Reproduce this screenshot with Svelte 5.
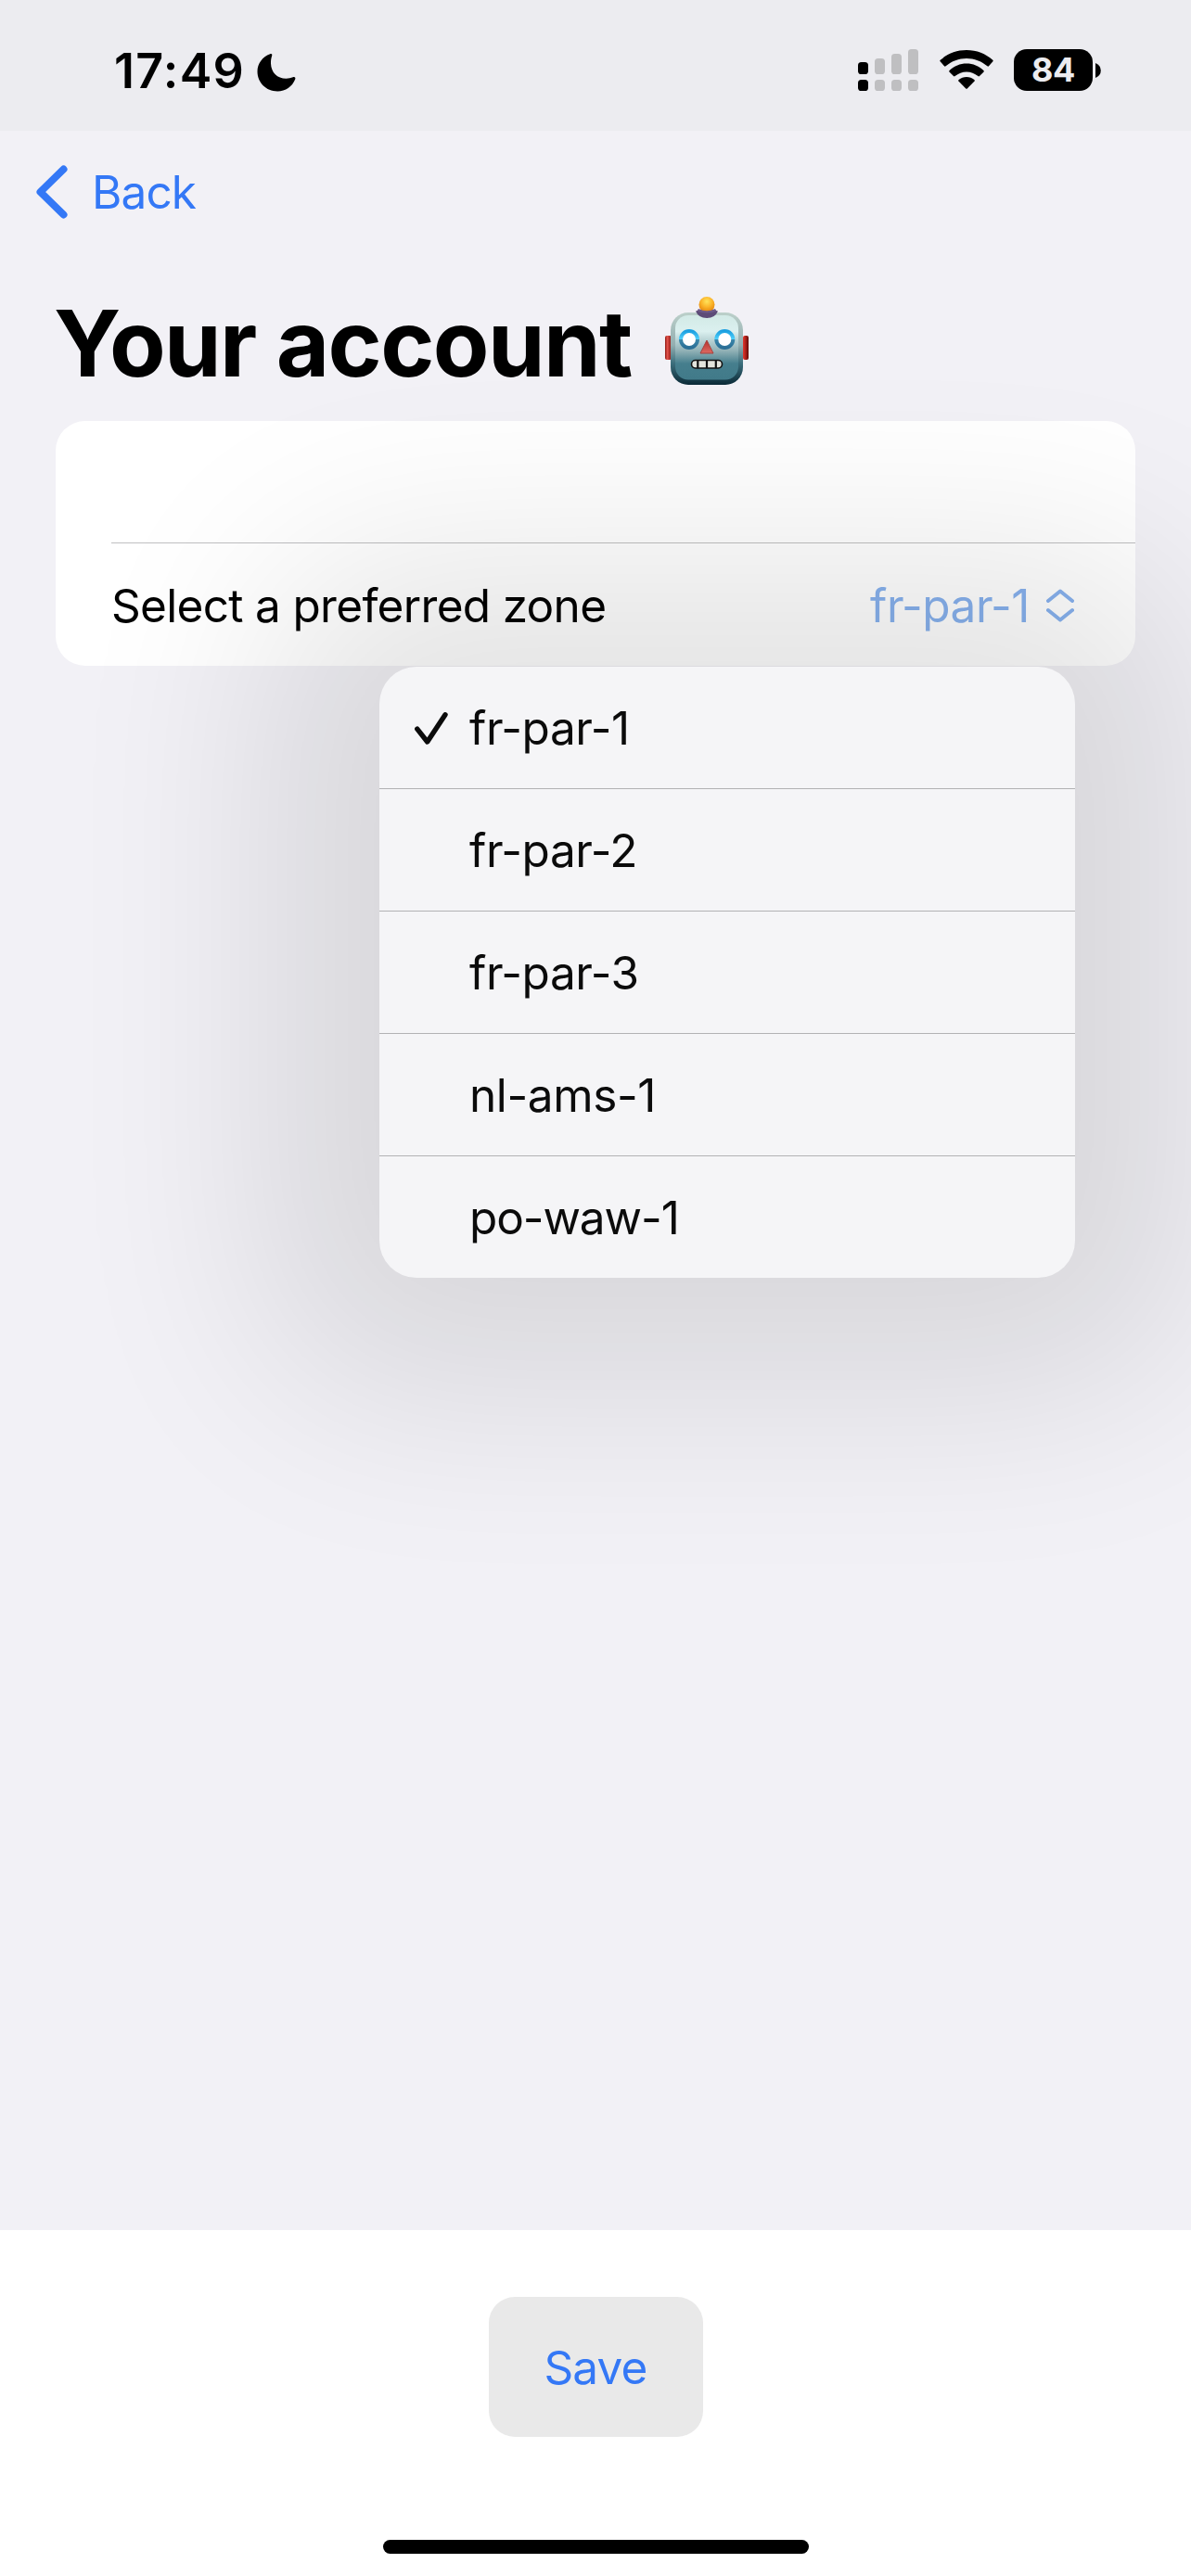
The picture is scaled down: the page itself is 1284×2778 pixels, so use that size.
<script>
  const zones = ['fr-par-1', 'fr-par-2', 'fr-par-3', 'nl-ams-1', 'po-waw-1'];
  let selected = $state('fr-par-1');
</script>

<div class="screen">
  <header class="status">
    <div class="clock">
      <span class="time">17:49</span>
      <svg class="moon" width="42" height="42" viewBox="0 0 42 42">
        <path d="M14.2 1.2C15.8.6 16.7 1.4 16.2 3C15.2 6 14.9 8.6 15 11.4C15.3 21 22 27.7 31.5 27.7C34.300 27.7 36.500 27.200 38.800 26.300C40.900 25.600 41.900 26.800 41.200 28.600C38 36.600 30.800 41.500 22.200 41.500C9.800 41.500.5 32.200.5 20.100C.5 11.500 5.800 4.300 14.200 1.200Z" />
      </svg>
    </div>
    <div class="indicators">
      <svg class="signal" width="65" height="45" viewBox="0 0 65 45">
        <g fill="#000">
          <rect x="0" y="14" width="11" height="13" rx="3.600" />
          <rect x="0" y="33" width="11" height="12" rx="3.600" />
        </g>
        <g fill="#bfbfc1">
          <rect x="18" y="10" width="11" height="17" rx="3.600" />
          <rect x="36" y="5" width="11" height="22" rx="3.600" />
          <rect x="54" y="0" width="11" height="27" rx="3.600" />
          <rect x="18" y="33" width="11" height="12" rx="3.600" />
          <rect x="36" y="33" width="11" height="12" rx="3.600" />
          <rect x="54" y="33" width="11" height="12" rx="3.600" />
        </g>
      </svg>
      <svg class="wifi" width="58" height="43" viewBox="0 0 58 43">
        <path d="M.6 12.300Q-.1 11.500.7 10.800C8.500 3.800 18 0 29 0S49.500 3.800 57.300 10.800Q58.100 11.500 57.400 12.300L53 17.300Q52.200 18.100 51.400 17.300C45 11.800 37.500 8.900 29 8.900S13 11.800 6.600 17.300Q5.800 18.100 5 17.300Z" />
        <path d="M10.400 23.400Q9.800 22.700 10.600 21.900C15.800 17.300 22 14.600 29 14.600S42.200 17.300 47.400 21.900Q48.200 22.700 47.600 23.400L43 28Q42.200 28.800 41.400 28.100C37.700 25 33.700 23.400 29 23.400S20.300 25 16.600 28.100Q15.800 28.800 15 28Z" />
        <path d="M20.400 33.500Q19.800 32.800 20.600 32.100C23 30.100 25.800 29 29 29S35 30.100 37.400 32.100Q38.200 32.800 37.600 33.500L30 41.200Q29 42.200 28 41.200Z" />
      </svg>
      <div class="battery">
        <span class="charge">84</span>
        <svg class="nub" width="6" height="16" viewBox="0 0 6 16"><path d="M0 0Q5.800 2.600 5.800 8T0 16Z" /></svg>
      </div>
    </div>
  </header>

  <main class="content">
    <nav class="nav">
      <svg width="34" height="58" viewBox="0 0 34 58">
        <path d="M29.500 4.500L4.500 29L29.500 53.500" fill="none" stroke="#3478f6" stroke-width="8" stroke-linecap="round" stroke-linejoin="round" />
      </svg>
      <span class="back">Back</span>
    </nav>

    <h1 class="title">
      <span class="title-text">Your account</span>
      <svg class="robot" width="92" height="96" viewBox="0 0 92 96">
        <defs>
          <linearGradient id="rim" x1="0" y1="0" x2="0" y2="1">
            <stop offset="0" stop-color="#bcd0ca" />
            <stop offset=".45" stop-color="#93aeb0" />
            <stop offset=".7" stop-color="#3c6f7d" />
            <stop offset="1" stop-color="#0b2a37" />
          </linearGradient>
          <linearGradient id="face" x1="0" y1="0" x2="0" y2="1">
            <stop offset="0" stop-color="#d2eae6" />
            <stop offset=".25" stop-color="#dbf0ef" />
            <stop offset=".55" stop-color="#91b1b6" />
            <stop offset=".75" stop-color="#457e8d" />
            <stop offset="1" stop-color="#417a89" />
          </linearGradient>
          <linearGradient id="earL"><stop offset="0" stop-color="#8d1b16" /><stop offset=".35" stop-color="#e2524a" /><stop offset="1" stop-color="#861510" /></linearGradient>
          <linearGradient id="earR"><stop offset="0" stop-color="#e2382f" /><stop offset=".4" stop-color="#b8241c" /><stop offset="1" stop-color="#5d0a08" /></linearGradient>
          <linearGradient id="eye" x1="0" y1="0" x2="0" y2="1">
            <stop offset="0" stop-color="#1b9fe0" />
            <stop offset=".48" stop-color="#4fd0fb" />
            <stop offset=".52" stop-color="#3b87ab" />
            <stop offset="1" stop-color="#2b6f96" />
          </linearGradient>
          <radialGradient id="bulb" cx=".5" cy=".3" r=".7">
            <stop offset="0" stop-color="#ffe45c" />
            <stop offset=".5" stop-color="#fbb52a" />
            <stop offset="1" stop-color="#e2820c" />
          </radialGradient>
          <linearGradient id="nose" x1="0" y1="0" x2="0" y2="1"><stop offset="0" stop-color="#b9302b" /><stop offset="1" stop-color="#dc6b63" /></linearGradient>
        </defs>
        <rect x="0" y="42" width="7" height="26" rx="2" fill="url(#earL)" />
        <rect x="84" y="42" width="6" height="26" rx="2" fill="url(#earR)" />
        <rect x="6" y="17" width="78" height="78" rx="19" fill="url(#rim)" />
        <rect x="11" y="20" width="68" height="69.500" rx="14" fill="url(#face)" />
        <path d="M33 15.500Q45 11 57 15.500Q54 23 45 23T33 15.500Z" fill="#5d4c78" />
        <circle cx="45" cy="8.500" r="8.500" fill="url(#bulb)" />
        <path d="M36 13Q45 17.500 54 13L55.500 15.500Q45 19.500 34.500 15.500Z" fill="#6d5a88" />
        <circle cx="26" cy="46" r="9" fill="#fff" stroke="url(#eye)" stroke-width="4" />
        <circle cx="64.300" cy="46" r="9" fill="#fff" stroke="url(#eye)" stroke-width="4" />
        <path d="M45 47L52 61H38Z" fill="url(#nose)" stroke="#a5413d" stroke-width="1" stroke-linejoin="round" />
        <rect x="28.500" y="68.500" width="33" height="8.500" rx="4.200" fill="#e3e4dc" stroke="#111" stroke-width="1.600" />
        <path d="M35.300 68.500V77M45 68.500V77M54.800 68.500V77" stroke="#111" stroke-width="2.200" />
      </svg>
    </h1>

    <section class="card">
      <div class="row empty"></div>
      <div class="row picker">
        <span class="label">Select a preferred zone</span>
        <span class="value">
          <span class="value-text">{selected}</span>
          <svg width="30" height="36" viewBox="0 0 30 36">
            <path d="M2 13L15 2.500L28 13M2 23L15 33.500L28 23" fill="none" stroke="#88b2ee" stroke-width="4" stroke-linecap="round" stroke-linejoin="round" />
          </svg>
        </span>
      </div>
      <div class="menu">
        {#each zones as zone}
          <div class="option" onclick={() => (selected = zone)} role="menuitem" tabindex="-1" onkeydown={() => (selected = zone)}>
            <span class="mark">
              {#if zone === selected}
                <svg width="36" height="35" viewBox="0 0 36 35">
                  <path d="M2.800 18.200L13.700 32L33 2.800" fill="none" stroke="#0b0b0b" stroke-width="5.400" stroke-linecap="round" stroke-linejoin="round" />
                </svg>
              {/if}
            </span>
            <span class="zone">{zone}</span>
          </div>
        {/each}
      </div>
    </section>
  </main>

  <footer class="footer">
    <button class="save">Save</button>
    <div class="home"></div>
  </footer>
</div>

<style>
  :global(body) {
    margin: 0;
    background: #f2f1f6;
  }
  .screen {
    width: 1284px;
    height: 2778px;
    display: flex;
    flex-direction: column;
    overflow: hidden;
    box-sizing: border-box;
    background: #f2f1f6;
    color: #000;
    font-family: Inter, 'Liberation Sans', sans-serif;
    font-size: 49.5px;
    line-height: 60px;
  }
  .screen * {
    box-sizing: border-box;
  }
  svg {
    display: block;
    flex: none;
  }
  .status {
    height: 141px;
    flex: none;
    display: flex;
    justify-content: space-between;
    padding: 53px 97px 0 123px;
    background: #ececf0;
  }
  .clock,
  .indicators {
    display: flex;
    align-items: flex-start;
  }
  .time {
    width: 154px;
    margin-top: -6px;
    font-size: 52px;
    font-weight: 600;
    letter-spacing: 1.3px;
  }
  .moon {
    margin-top: 4px;
  }
  .wifi {
    margin: 1px 22px 0 23px;
  }
  .battery {
    display: flex;
    align-items: center;
    gap: 3px;
  }
  .charge {
    width: 85px;
    height: 45px;
    border-radius: 14px;
    background: #000;
    color: #ececf0;
    font-size: 36px;
    font-weight: 700;
    line-height: 45px;
    letter-spacing: -0.5px;
    text-align: center;
  }
  .content {
    flex: 1;
    display: flex;
    flex-direction: column;
  }
  .nav {
    height: 132px;
    display: flex;
    align-items: center;
    gap: 26px;
    padding-left: 39px;
    color: #3478f6;
  }
  .back {
    letter-spacing: -0.9px;
  }
  .title {
    height: 181px;
    margin: 0;
    padding: 37px 0 0 58px;
    display: flex;
    align-items: flex-start;
    font-size: 99px;
    font-weight: 700;
    line-height: 120px;
  }
  .title-text {
    width: 659px;
    letter-spacing: -1.6px;
    white-space: nowrap;
  }
  .robot {
    margin-top: 10px;
  }
  .card {
    position: relative;
    height: 264px;
    margin: 0 60px;
    border-radius: 32px;
    background: #fff;
  }
  .row {
    height: 132px;
    margin-left: 60px;
  }
  .empty {
    border-bottom: 1px solid #bfbfc1;
  }
  .picker {
    display: flex;
    align-items: center;
    justify-content: space-between;
    padding: 1px 66px 0 0;
  }
  .label {
    letter-spacing: -0.68px;
  }
  .value {
    display: flex;
    align-items: center;
    gap: 18px;
    color: #88b2ee;
    letter-spacing: -0.5px;
  }
  .menu {
    position: absolute;
    top: 265px;
    right: 65px;
    width: 750px;
    height: 659px;
    border-radius: 40px;
    background: #f5f5f7;
    color: #0b0b0b;
    box-shadow: 0 0 220px 120px rgba(0, 0, 0, 0.11);
  }
  .option {
    height: 132px;
    display: flex;
    align-items: center;
    padding: 1px 0 0 38px;
    border-bottom: 1px solid #b2b2b4;
    letter-spacing: -0.4px;
  }
  .option:last-child {
    height: 131px;
    border-bottom: 0;
    letter-spacing: -1.1px;
  }
  .mark {
    width: 59px;
  }
  .footer {
    height: 373px;
    flex: none;
    display: flex;
    flex-direction: column;
    align-items: center;
    padding-top: 72px;
    background: #fff;
  }
  .save {
    width: 231px;
    height: 151px;
    padding: 0;
    border: 0;
    border-radius: 28px;
    background: #e9e9e9;
    color: #3478f6;
    font: inherit;
    letter-spacing: -0.9px;
  }
  .home {
    width: 459px;
    height: 15px;
    margin-top: 111px;
    border-radius: 8px;
    background: #000;
  }
</style>
